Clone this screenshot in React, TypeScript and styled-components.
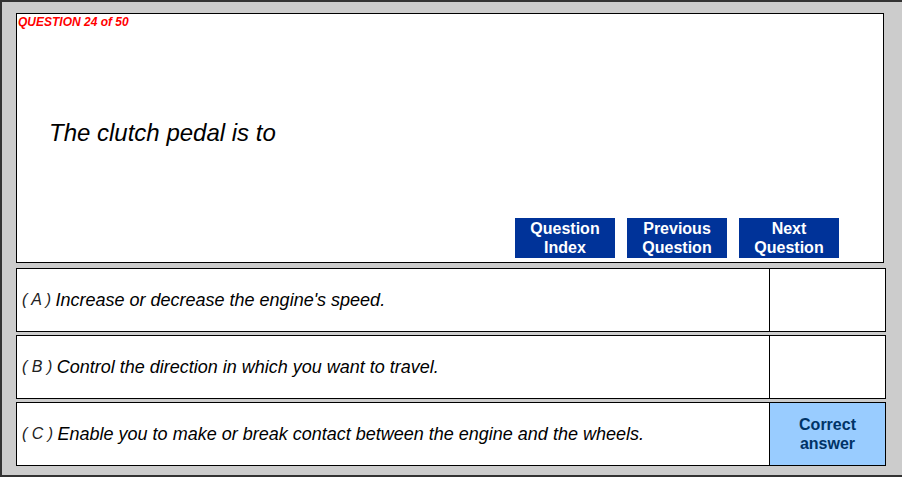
import React from "react";
import styled, { createGlobalStyle } from "styled-components";

const GlobalStyle = createGlobalStyle`
  html, body {
    margin: 0;
    padding: 0;
    background: #ffffff;
  }
  * {
    box-sizing: border-box;
  }
`;

const Frame = styled.div`
  width: 902px;
  height: 477px;
  background: #cccccc;
  border-top: 2px solid #333333;
  border-left: 2px solid #333333;
  border-bottom: 2px solid #333333;
  padding: 11px 0 0 14px;
  font-family: "Liberation Sans", Arial, sans-serif;
`;

const Column = styled.div`
  width: 870px;
  display: flex;
  flex-direction: column;
`;

const QuestionPanel = styled.section`
  width: 868px;
  height: 250px;
  background: #ffffff;
  border: 1px solid #000000;
  display: flex;
  flex-direction: column;
  margin-bottom: 5px;
`;

const Counter = styled.div`
  color: #ff0000;
  font-size: 12px;
  font-weight: bold;
  font-style: italic;
  line-height: 14px;
  padding: 1px 0 0 1px;
`;

const QuestionText = styled.div`
  flex: 1;
  display: flex;
  align-items: center;
  padding: 18px 0 0 32px;
  font-size: 24px;
  font-style: italic;
  color: #000000;
`;

const ButtonRow = styled.div`
  display: flex;
  justify-content: flex-end;
  gap: 12px;
  padding: 0 44px 4px 0;
`;

const NavButton = styled.button`
  width: 100px;
  height: 40px;
  border: none;
  padding: 0;
  background: #003399;
  color: #ffffff;
  font-family: "Liberation Sans", Arial, sans-serif;
  font-size: 16px;
  font-weight: bold;
  line-height: 19px;
  text-align: center;
  cursor: pointer;
`;

const AnswerList = styled.div`
  display: flex;
  flex-direction: column;
  gap: 3px;
`;

const AnswerRow = styled.div`
  height: 64px;
  width: 870px;
  background: #ffffff;
  border: 1px solid #000000;
  display: flex;
`;

const AnswerText = styled.div`
  flex: 1;
  display: flex;
  align-items: center;
  padding-left: 5px;
  font-size: 18px;
  font-style: italic;
  color: #000000;
  white-space: pre;
`;

const Letter = styled.span`
  font-size: 16px;
  color: #222222;
`;

const ResultCell = styled.div<{ $correct?: boolean }>`
  width: 116px;
  border-left: 1px solid #000000;
  background: ${(p) => (p.$correct ? "#99ccff" : "#ffffff")};
  color: #003366;
  font-size: 16px;
  font-weight: bold;
  line-height: 19px;
  display: flex;
  align-items: center;
  justify-content: center;
  text-align: center;
`;

const answers = [
  { letter: "A", text: "Increase or decrease the engine's speed.", correct: false },
  { letter: "B", text: "Control the direction in which you want to travel.", correct: false },
  {
    letter: "C",
    text: "Enable you to make or break contact between the engine and the wheels.",
    correct: true,
  },
];

export default function App() {
  return (
    <>
      <GlobalStyle />
      <Frame>
        <Column>
          <QuestionPanel>
            <Counter>QUESTION 24 of 50</Counter>
            <QuestionText>The clutch pedal is to</QuestionText>
            <ButtonRow>
              <NavButton>
                Question
                <br />
                Index
              </NavButton>
              <NavButton>
                Previous
                <br />
                Question
              </NavButton>
              <NavButton>
                Next
                <br />
                Question
              </NavButton>
            </ButtonRow>
          </QuestionPanel>
          <AnswerList>
            {answers.map((a) => (
              <AnswerRow key={a.letter}>
                <AnswerText>
                  <Letter>{`( ${a.letter} ) `}</Letter>
                  {a.text}
                </AnswerText>
                <ResultCell $correct={a.correct}>
                  {a.correct && (
                    <span>
                      Correct
                      <br />
                      answer
                    </span>
                  )}
                </ResultCell>
              </AnswerRow>
            ))}
          </AnswerList>
        </Column>
      </Frame>
    </>
  );
}
